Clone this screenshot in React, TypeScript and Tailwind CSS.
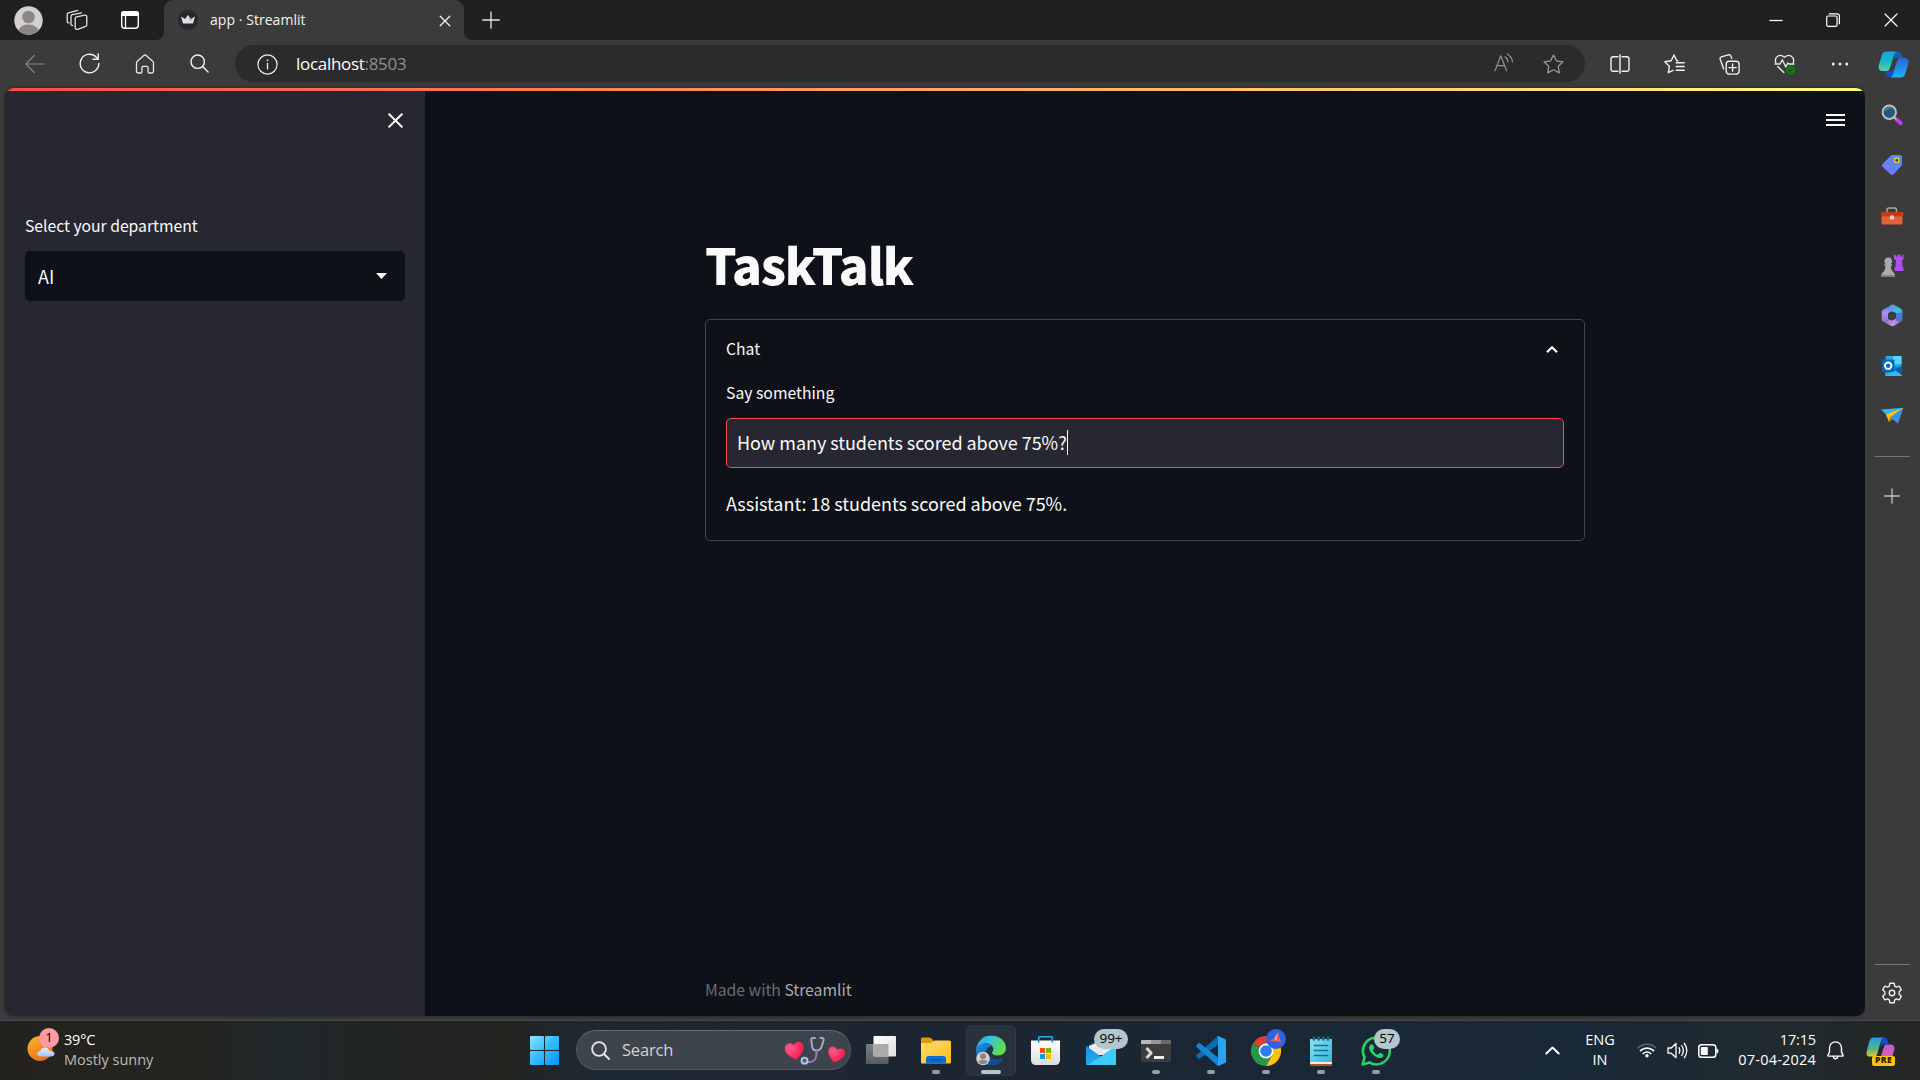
import React from "react";

const UI = "font-['Open_Sans','Noto_Sans',sans-serif]";
const SRC = "font-['Noto_Sans_CJK_SC',sans-serif]";

type IconProps = { w?: number; h?: number; box: string; children: React.ReactNode; className?: string };

function Icon({ w = 20, h = 20, box, children, className = "" }: IconProps) {
  return (
    <svg width={w} height={h} viewBox={box} fill="none" strokeLinecap="round" strokeLinejoin="round" className={"shrink-0 " + className}>
      {children}
    </svg>
  );
}

function Cell({ className = "", children }: { className?: string; children: React.ReactNode }) {
  return <div className={"flex shrink-0 items-center justify-center " + className}>{children}</div>;
}

function TabStrip() {
  return (
    <header className="flex h-10 shrink-0 bg-[#3b3b3b]">
      <div className="flex w-[164px] items-center rounded-br-[8px] bg-[#202020]">
        <Cell className="ml-[13px] w-[30px]">
          <Icon w={29} h={29} box="0 0 29 29">
            <defs>
              <clipPath id="avatar"><circle cx="14.5" cy="14.5" r="14.2" /></clipPath>
            </defs>
            <g clipPath="url(#avatar)">
              <rect width="29" height="29" fill="#d2d0ce" />
              <circle cx="14.5" cy="11" r="6.3" fill="#8a8785" />
              <ellipse cx="14.5" cy="26.5" rx="10.5" ry="8" fill="#8a8785" />
            </g>
          </Icon>
        </Cell>
        <Cell className="ml-[18px] w-8">
          <Icon w={22} h={22} box="0 0 22 22">
            <g stroke="#e2e2e2" strokeWidth="1.3">
              <path d="M9.2 9.4c0-.8.5-1.4 1.300-1.600l8.300-1.700c1.200-.2 2 .5 2 1.600v8c0 .8-.5 1.500-1.300 1.700l-7.600 2.900c-1.200.4-2.700-.2-2.700-1.500z" />
              <path d="M6.600 16.500c-1 .1-1.600-.6-1.600-1.600V7.300c0-.8.5-1.400 1.300-1.600l9.300-1.900" />
              <path d="M3 13.800c-1.200.2-1.800-.5-1.800-1.500V5.400c0-.8.5-1.400 1.300-1.600L11.700 1.300" />
            </g>
          </Icon>
        </Cell>
        <Cell className="ml-[21px] w-8">
          <Icon w={20} h={20} box="0 0 20 20">
            <rect x="1.700" y="1.700" width="16.600" height="16.600" rx="3" stroke="#fff" strokeWidth="1.400" />
            <path d="M1 6V4a3 3 0 0 1 3-3h12a3 3 0 0 1 3 3v2z" fill="#fff" />
            <path d="M5.500 6v12" stroke="#fff" strokeWidth="1.300" />
          </Icon>
        </Cell>
      </div>
      <div className="w-[300px] bg-[#202020]">
        <div className="flex h-full items-center rounded-t-[9px] bg-[#3b3b3b] pl-[14px] pr-[13px]">
          <Icon w={20} h={20} box="0 0 20 20">
            <circle cx="10" cy="10" r="10" fill="#262730" />
            <path d="M3 6.500l4 2.500 3-4 3 4 4-2.500-2 7H5z" fill="#dedede" />
            <path d="M10 5l3 4 4-2.500L12 11z" fill="#a5a5a5" />
          </Icon>
          <span className={UI + " ml-3 grow pb-px text-[14px] leading-5 tracking-[0.05px] text-[#f4f4f4]"}>app · Streamlit</span>
          <Icon w={12} h={12} box="0 0 12 12" className="mt-px">
            <path d="M1.200 1.200l9.600 9.600M10.800 1.200l-9.600 9.600" stroke="#f0f0f0" strokeWidth="1.300" />
          </Icon>
        </div>
      </div>
      <div className="flex grow items-center rounded-bl-[8px] bg-[#202020] pl-[18px]">
        <Icon w={18} h={18} box="0 0 18 18">
          <path d="M9 .8v16.400M.8 9h16.400" stroke="#e8e8e8" strokeWidth="1.300" />
        </Icon>
        <div className="ml-auto flex">
          <Cell className="w-[57px]">
            <Icon w={14} h={14} box="0 0 14 14"><path d="M.5 7.500h13" stroke="#fff" strokeWidth="1.200" strokeLinecap="butt" /></Icon>
          </Cell>
          <Cell className="w-[58px]">
            <Icon w={14} h={14} box="0 0 14 14">
              <rect x=".7" y="3" width="10.400" height="10.400" rx="1.500" stroke="#fff" strokeWidth="1.200" />
              <path d="M3.300.8h7.700a2.400 2.400 0 0 1 2.400 2.400v7.500" stroke="#fff" strokeWidth="1.200" />
            </Icon>
          </Cell>
          <Cell className="w-[58px]">
            <Icon w={14} h={14} box="0 0 14 14"><path d="M1 1l12 12M13 1L1 13" stroke="#fff" strokeWidth="1.200" /></Icon>
          </Cell>
        </div>
      </div>
    </header>
  );
}

function Toolbar() {
  return (
    <div className="flex h-12 shrink-0 bg-[#3b3b3b]">
      <div className="flex w-[235px] items-center pb-[1px] pl-[7px]">
        <Cell className="w-[55px]">
          <Icon w={20} h={20} box="0 0 20 20"><path d="M19.300 10H1M9.300 1.500L.9 10l8.400 8.500" stroke="#858585" strokeWidth="1.200" /></Icon>
        </Cell>
        <Cell className="w-[55px]">
          <Icon w={21} h={21} box="0 0 21 21">
            <path d="M19.800 10.500A9.300 9.300 0 1 1 16.500 3.400L19 6" stroke="#f2f2f2" strokeWidth="1.400" />
            <path d="M19.200 1v5.200H14" stroke="#f2f2f2" strokeWidth="1.400" />
          </Icon>
        </Cell>
        <Cell className="w-[55px]">
          <Icon w={20} h={20} box="0 0 20 20">
            <path d="M1.500 9c0-.7.300-1.300.8-1.700L8.800 1.500a1.800 1.800 0 0 1 2.400 0l6.500 5.800c.5.400.8 1 .8 1.700v8.200c0 1-.8 1.800-1.800 1.800h-2.400a1.200 1.200 0 0 1-1.200-1.200V13.500c0-.7-.5-1.200-1.200-1.200H8.100c-.7 0-1.200.5-1.200 1.200v4.300c0 .7-.5 1.200-1.200 1.200H3.300c-1 0-1.800-.8-1.800-1.800z" stroke="#e6e6e6" strokeWidth="1.300" />
          </Icon>
        </Cell>
        <Cell className="w-[55px]">
          <Icon w={19} h={19} box="0 0 19 19"><circle cx="7.700" cy="7.700" r="6.700" stroke="#f0f0f0" strokeWidth="1.400" /><path d="M12.600 12.600l5.500 5.500" stroke="#f0f0f0" strokeWidth="1.400" /></Icon>
        </Cell>
      </div>
      <div className="mt-[5px] flex h-[37px] w-[1350px] items-center rounded-full bg-[#2b2b2b] pl-[22px] pr-[21px]">
        <Icon w={21} h={21} box="0 0 21 21" className="mt-px">
          <circle cx="10.500" cy="10.500" r="9.600" stroke="#f0f0f0" strokeWidth="1.200" />
          <path d="M10.500 9.500v5.500" stroke="#f0f0f0" strokeWidth="1.300" /><circle cx="10.500" cy="6.300" r=".9" fill="#f0f0f0" />
        </Icon>
        <span className={UI + " ml-[18px] grow text-[17px] leading-6 tracking-[-0.3px] text-white"}>localhost<span className="text-[#8f8f8f]">:8503</span></span>
        <Icon w={20} h={19} box="0 0 20 19" className="mr-[29px] -mt-[2px]">
          <g stroke="#929292" strokeWidth="1.200">
            <path d="M1 17.800L6.800 2.800l5.800 15M3.200 12.600h7.300" />
            <path d="M11 3.800c1.700 1.200 2.700 3 2.900 5M13.300.9c2.900 1.700 4.900 4.700 5.200 8" />
          </g>
        </Icon>
        <Icon w={21} h={20} box="0 0 21 20">
          <path d="M10.500 1l2.900 5.800 6.500 1-4.700 4.600 1.100 6.500-5.800-3.100-5.800 3.100 1.100-6.500L1.100 7.800l6.500-1z" stroke="#9a9a9a" strokeWidth="1.300" />
        </Icon>
      </div>
      <div className="flex w-[335px] items-center pl-[7px]">
        <Cell className="w-[55px]">
          <Icon w={20} h={20} box="0 0 20 20">
            <path d="M8 2.800H3.200C1.900 2.800 1 3.700 1 5v10c0 1.300.9 2.200 2.200 2.200H8M12 2.800h4.800c1.300 0 2.200.9 2.200 2.200v10c0 1.300-.9 2.200-2.200 2.200H12M10 .7v18.600" stroke="#f0f0f0" strokeWidth="1.400" />
          </Icon>
        </Cell>
        <Cell className="w-[55px]">
          <Icon w={21} h={20} box="0 0 21 20">
            <path d="M13.800 6.800l-1.100-.2L10 1 7.100 6.800l-6.200 1 4.500 4.600-1.100 6.300L9 16.400M12.200 8.800h8M12.200 12.500h8M12.200 16.200h8" stroke="#f0f0f0" strokeWidth="1.400" />
          </Icon>
        </Cell>
        <Cell className="w-[55px]">
          <Icon w={21} h={21} box="0 0 21 21">
            <rect x="7.200" y="7.200" width="12.900" height="12.900" rx="3" stroke="#f0f0f0" strokeWidth="1.400" />
            <path d="M13.600 10v7.300M10 13.600h7.300M4.600 14.800L1.200 5.300c-.3-1 .1-2 1.100-2.400L9.400.9c1-.3 2 .1 2.400 1.100l.9 2.300" stroke="#f0f0f0" strokeWidth="1.400" />
          </Icon>
        </Cell>
        <Cell className="w-[55px]">
          <Icon w={22} h={21} box="0 0 22 21">
            <path d="M1.800 8.500C-.2 3 5.800-1 10.500 3.300 15.200-1 21 3 19.300 8.500M1 10h5l2.300-4.200 3.400 7 2.100-3.800 1 1H20M3.800 12.600l6 5.800" stroke="#e8e8e8" strokeWidth="1.400" />
            <circle cx="16.500" cy="16" r="4.600" fill="#117a12" />
            <path d="M14.500 16.100l1.400 1.400 2.700-2.900" stroke="#0a3f0b" strokeWidth="1" />
          </Icon>
        </Cell>
        <Cell className="w-[55px]">
          <Icon w={18} h={6} box="0 0 18 6"><g fill="#f0f0f0"><circle cx="2.200" cy="3" r="1.500" /><circle cx="9" cy="3" r="1.500" /><circle cx="15.800" cy="3" r="1.500" /></g></Icon>
        </Cell>
        <Cell className="w-[52px]">
          <Icon w={31} h={27} box="0 0 31 27">
            <defs>
              <linearGradient id="cpA" x1="0" y1="0" x2="0" y2="1"><stop stopColor="#16a5dd" /><stop offset=".5" stopColor="#15b7c4" /><stop offset="1" stopColor="#5bd59b" /></linearGradient>
              <linearGradient id="cpB" x1="0" y1="0" x2="0" y2="1"><stop stopColor="#2a63d8" /><stop offset="1" stopColor="#1fb4f2" /></linearGradient>
            </defs>
            <path d="M17 .6h3.200c1.500 0 2.300 1 2.900 2.500l1.400 4H19c-2.500 0-3.300 1.500-3.900 3.600z" fill="#0f62ae" />
            <path d="M14.500 26.400h-3c-1.700 0-2.700-1.100-3.200-2.800L7.500 20h4.700c2 0 3-1.200 3.600-3.200z" fill="#1c4bd2" />
            <path d="M8.500.6h10.200c-1.500.3-2.200 1.700-2.700 3.300l-4 13.200c-.6 1.900-1.600 2.900-3.600 2.900H4.200C1.500 20-.1 17.700.7 14.500L3.700 4.400C4.500 1.800 6 .6 8.500.6z" fill="url(#cpA)" />
            <path d="M22.500 26.400H12.300c1.500-.3 2.200-1.700 2.700-3.300l4-13.200C19.600 8 20.600 7 22.600 7h4.200c2.700 0 4.300 2.300 3.500 5.500l-3 10.100c-.8 2.600-2.300 3.800-4.800 3.800z" fill="url(#cpB)" />
          </Icon>
        </Cell>
      </div>
    </div>
  );
}

function StreamlitSidebar() {
  return (
    <aside className={SRC + " flex w-[420px] shrink-0 flex-col bg-[#262730] px-5 text-[#fafafa]"}>
      <div className="mt-[22px] flex h-[15px] justify-end">
        <Icon w={15} h={15} box="0 0 15 15" className="mr-[2px]"><path d="M1.200 1.200l12.600 12.600M13.800 1.200L1.200 13.800" stroke="#fafafa" strokeWidth="2" /></Icon>
      </div>
      <div className="mt-[86px] h-6 text-[15.750px] leading-6 tracking-[-0.030px]">Select your department</div>
      <div className="mt-[13px] flex h-[50px] items-center justify-between rounded-[5px] bg-[#0e1117] pl-[13px] pr-[18px] text-[18px] leading-6">
        <span>AI</span>
        <Icon w={11} h={6} box="0 0 11 6"><path d="M0 0h11L5.500 6z" fill="#fafafa" /></Icon>
      </div>
    </aside>
  );
}

function StreamlitMain() {
  return (
    <main className={SRC + " relative flex grow flex-col bg-[#0e1117] text-[#fafafa]"}>
      <div className="flex h-[56px] items-center justify-end pr-5 pt-px">
        <div className="flex w-[19px] flex-col gap-[3px]">
          <div className="h-[2px] bg-[#fafafa]" />
          <div className="h-[2px] bg-[#fafafa]" />
          <div className="h-[2px] bg-[#fafafa]" />
        </div>
      </div>
      <div className="mx-auto flex w-[880px] grow flex-col">
        <h1 className="mt-[84px] h-[66px] text-[49.500px] font-black leading-[66px] tracking-[-1.200px]">TaskTalk</h1>
        <section className="mt-[22px] flex h-[222px] flex-col rounded-[5px] border border-[#41444c] px-5">
          <div className="mt-[17px] flex h-6 items-center justify-between text-[15.750px] leading-6">
            <span>Chat</span>
            <Icon w={14} h={9} box="0 0 14 9" className="mr-[5px]"><path d="M2 7.200l5-5 5 5" stroke="#fafafa" strokeWidth="2.200" strokeLinecap="butt" strokeLinejoin="miter" /></Icon>
          </div>
          <div className="mt-5 h-6 text-[15.750px] leading-6">Say something</div>
          <div className="mt-[13px] flex h-[50px] shrink-0 items-center rounded-[5px] border border-[#ff4b4b] bg-[#262730] pb-[2px] pl-[10px] text-[18px]">
            <span className="leading-6 tracking-[-0.040px]">How many students scored above 75%?</span>
            <span className="h-[25px] w-px bg-white" />
          </div>
          <p className="mt-[23px] h-6 text-[18px] leading-6 tracking-[-0.040px]">Assistant: 18 students scored above 75%.</p>
        </section>
        <footer className="mb-[14px] mt-auto h-6 text-[15.750px] leading-6 tracking-[-0.030px] text-[#6a6c72]">
          Made with <span className="text-[#a9abb0]">Streamlit</span>
        </footer>
      </div>
    </main>
  );
}

function EdgeRail() {
  return (
    <aside className="flex w-[55px] shrink-0 flex-col items-center bg-[#3b3b3b] pr-[1px]">
      <Cell className="mt-[2px] h-[50px]">
        <Icon w={22} h={22} box="0 0 22 22">
          <path d="M15.500 15.500l4 3.600" stroke="#c03cf5" strokeWidth="4" /><path d="M12.500 12.500l2 2" stroke="#bbb" strokeWidth="2" />
          <circle cx="8.300" cy="8.300" r="6.700" fill="#22597a" stroke="#bdbdbd" strokeWidth="2" /><path d="M4.500 7a4.500 4.500 0 0 1 5-3" stroke="#5289a8" strokeWidth="1.200" />
        </Icon>
      </Cell>
      <Cell className="h-[50px]">
        <Icon w={22} h={22} box="0 0 22 22">
          <defs><linearGradient id="tag" x1="1" y1="0" x2="0" y2="1"><stop stopColor="#4b8cf2" /><stop offset="1" stopColor="#7b78ff" /></linearGradient></defs>
          <path d="M12 1h7c1.200 0 2 .8 2 2v7c0 1-.3 1.600-1 2.300l-7.500 8c-1 1-2 1-3 0L1.700 13c-1-1-1-2 0-3L9.500 2C10.300 1.200 11 1 12 1z" fill="url(#tag)" />
          <circle cx="15.700" cy="6.200" r="2.200" fill="#27417b" stroke="#f4d21f" strokeWidth="1.400" />
        </Icon>
      </Cell>
      <Cell className="h-[52px]">
        <Icon w={24} h={18} box="0 0 24 18">
          <path d="M7 6V3c0-1.200.8-1.900 2-1.900h5.500c1.200 0 2 .7 2 1.900v3" stroke="#a6a6a6" strokeWidth="1.500" />
          <rect x="1.500" y="8" width="21" height="9.500" rx="1.500" fill="#e2603a" />
          <rect x="1" y="5" width="22.500" height="4.500" rx="1" fill="#c23c12" />
          <circle cx="12" cy="10.500" r="2.200" fill="#d0cfcd" />
        </Icon>
      </Cell>
      <Cell className="h-[48px]">
        <Icon w={24} h={24} box="0 0 24 24">
          <path d="M14 1h2v1.500h1.500V.5h3v2H22V1h1.500v4L22 6.500l.7 7h.8v3.500h-9v-3.500h.8l.7-7L14 5z" fill="#b14df0" />
          <path d="M8.200 3.500a3.800 3.800 0 0 1 2.600 6.700h1.300v1.600h-1.300c.1 3 .7 5 3.200 7.200.9.800 1 1.800 1 3.500H1.200c0-1.700.2-2.700 1.100-3.500C4.700 16.800 5.400 14.800 5.500 11.800H4.300v-1.600h1.300A3.800 3.800 0 0 1 8.200 3.500z" fill="#ababab" />
          <path d="M1.200 20.800H15v1.700H1.200z" fill="#8a8a8a" />
        </Icon>
      </Cell>
      <Cell className="h-[52px]">
        <Icon w={22} h={23} box="0 0 22 23" className="-mt-px">
          <defs>
            <linearGradient id="m3a" x1="0" y1="0" x2="0" y2="1"><stop stopColor="#3b86de" /><stop offset=".5" stopColor="#b48be6" /><stop offset="1" stopColor="#8a6fd2" /></linearGradient>
            <linearGradient id="m3b" x1="0" y1="0" x2="1" y2="1"><stop stopColor="#6a8fe0" /><stop offset=".6" stopColor="#38bdea" /><stop offset="1" stopColor="#2f9fdc" /></linearGradient>
            <linearGradient id="m3c" x1="0" y1="0" x2="1" y2="0"><stop stopColor="#8466bd" /><stop offset=".5" stopColor="#c795dc" /><stop offset="1" stopColor="#5f6fcf" /></linearGradient>
          </defs>
          <path d="M11 .7L2.500 5.500C1.200 6.300.7 7 .7 8.500v7c0 1 .5 1.800 1.500 2.300 2 1 5-.2 5-2.700V9.700c1-1.500 2-2 3.300-4z" fill="url(#m3a)" />
          <path d="M8 2.300l2.500-1.400c1-.5 1.800-.5 2.800 0l6.500 3.800c1 .6 1.500 1.500 1.500 2.700v5.400L14.500 8.800 10 7.500 8.500 8.300z" fill="url(#m3b)" />
          <path d="M19.800 17.700l-7 4.200c-1 .6-2 .6-3 0l-7-4.200c2.500.4 4.400-.7 4.500-2.700l3.700 1.200 4-2.700 6.300-.8c.1 1.900-.3 4.100-1.500 5z" fill="url(#m3c)" />
          <path d="M21.300 9v5.500c0 1.500-.5 2.500-1.600 3.200-2 .8-4.500-.2-4.700-2.600V9z" fill="#4f74d4" />
          <path d="M11 7.500l4 2.200v4.800l-4 2.200-4-2.200V9.700z" fill="#3b3b3b" />
        </Icon>
      </Cell>
      <Cell className="h-[48px]">
        <Icon w={22} h={22} box="0 0 22 22">
          <rect x="4.500" y="1" width="16" height="16" rx="1" fill="#28a8ea" />
          <path d="M12 1h7.500a1 1 0 0 1 1 1v7H12z" fill="#50d9ff" />
          <path d="M4 11l17 0v9a1 1 0 0 1-1 1H5a1 1 0 0 1-1-1z" fill="#1490df" />
          <path d="M21 11v9.500L12 15z" fill="#0a5ea8" /><path d="M4 20l10-5 7 5.500c-.3.300-.6.500-1 .5H5z" fill="#35b8f1" />
          <rect x="1" y="4.500" width="12.500" height="12.500" rx="1.200" fill="#0a64b8" />
          <circle cx="7.200" cy="10.700" r="3.200" stroke="#fff" strokeWidth="1.900" />
        </Icon>
      </Cell>
      <Cell className="h-[50px]">
        <Icon w={23} h={17} box="0 0 23 17">
          <path d="M0 2.500L22.500.8 7 9.500z" fill="#35b6f2" /><path d="M22.500.8L17 16.500 8.500 10z" fill="#3993e8" />
          <path d="M5 7.500L22.500.8 9 10.200l-1 5z" fill="#ffc21c" /><path d="M9 10.200l2.500 1.800L8 15z" fill="#d98305" />
        </Icon>
      </Cell>
      <div className="mt-[16px] h-px w-[35px] bg-[#757575]" />
      <Cell className="mt-[30px] h-[18px]">
        <Icon w={16} h={16} box="0 0 16 16"><path d="M8 .8v14.400M.8 8h14.400" stroke="#c4c4c4" strokeWidth="1.300" /></Icon>
      </Cell>
      <div className="mb-[17px] mt-auto h-px w-[35px] bg-[#757575]" />
      <Icon w={22} h={22} box="0 0 24 24" className="mb-[16px]">
        <path d="M9.700 1.300h4.600l.7 3.200 1.800 1 3.100-1 2.300 4-2.400 2.200v2.600l2.400 2.200-2.300 4-3.100-1-1.800 1-.7 3.200H9.700L9 19.500l-1.800-1-3.100 1-2.300-4 2.400-2.200v-2.600L1.800 8.500l2.300-4 3.100 1 1.800-1z" stroke="#efefef" strokeWidth="1.500" />
        <circle cx="12" cy="12" r="3" stroke="#efefef" strokeWidth="1.500" />
      </Icon>
    </aside>
  );
}

function TaskbarApp({ children, dot }: { children: React.ReactNode; dot?: boolean }) {
  return (
    <div className="relative flex h-full w-[55px] shrink-0 items-center justify-center">
      {children}
      {dot && <div className="absolute bottom-[6px] h-1 w-2 rounded-full bg-[#989da3]" />}
    </div>
  );
}

function Badge({ className, children }: { className: string; children: React.ReactNode }) {
  return (
    <div className={UI + " absolute top-[8px] flex h-5 items-center justify-center rounded-full bg-[#b2c6cd] text-[13.500px] leading-none text-black " + className}>
      {children}
    </div>
  );
}

function Heart({ id }: { id: string }) {
  return (
    <>
      <defs><radialGradient id={id} cx=".3" cy=".3" r=".8"><stop stopColor="#ff5a8c" /><stop offset=".6" stopColor="#fb2e62" /><stop offset="1" stopColor="#e81a45" /></radialGradient></defs>
      <path d="M9 17C3 12.500 0 9.500 0 5.500 0 .5 6-1.500 9 3c3-4.500 9-2.500 9 2.500 0 4-3 7-9 11.500z" fill={"url(#" + id + ")"} />
    </>
  );
}

function Taskbar() {
  return (
    <div className={UI + " flex h-[60px] shrink-0 border-t border-[#454a4e] bg-[linear-gradient(90deg,#24221f_0px,#242420_190px,#20282a_280px,#222424_400px,#242421_500px,#1c2932_600px,#1e2733_750px,#1c2631_900px,#1b2735_1250px,#192838_1560px,#1f2b30_1760px,#242624_1920px)]"}>
      <div className="flex w-[517px] pl-[27px]">
        <div className="relative w-[37px]">
          <Icon w={28} h={26} box="0 0 28 26" className="mt-[14px]">
            <defs>
              <linearGradient id="sun" x1="0" y1="0" x2=".6" y2="1"><stop stopColor="#f7bd2e" /><stop offset="1" stopColor="#f06a12" /></linearGradient>
              <linearGradient id="cloud" x1="0" y1="0" x2="0" y2="1"><stop stopColor="#e7f0ff" /><stop offset="1" stopColor="#a5c2f4" /></linearGradient>
            </defs>
            <circle cx="13" cy="13.500" r="12.500" fill="url(#sun)" />
            <path d="M13.500 21.500c-2 0-3.200-1-3.200-2.800 0-1.600 1.200-2.700 3-2.700.5-2.200 2.200-3.500 4.500-3.500s4 1.200 4.500 3.200c3 0 5.200.8 5.200 3.100 0 2-1.600 2.700-3.500 2.700z" fill="url(#cloud)" />
          </Icon>
          <div className="absolute left-[12px] top-[7px] flex h-5 w-5 items-center justify-center rounded-full bg-[#ff99a4] text-[13px] text-black">1</div>
        </div>
        <div className="flex flex-col pt-[9px] text-[14.500px] leading-5">
          <span className="tracking-[-0.200px] text-white">39°C</span>
          <span className="text-[#bcbcb9]">Mostly sunny</span>
        </div>
      </div>

      <TaskbarApp>
        <Icon w={29} h={29} box="0 0 29 29">
          <defs><linearGradient id="win" x1="0" y1="0" x2="29" y2="29" gradientUnits="userSpaceOnUse"><stop stopColor="#8fe2ff" /><stop offset=".45" stopColor="#38bfff" /><stop offset="1" stopColor="#0894f6" /></linearGradient></defs>
          <g fill="url(#win)"><rect width="14" height="14" rx="1" /><rect x="15" width="14" height="14" rx="1" /><rect y="15" width="14" height="14" rx="1" /><rect x="15" y="15" width="14" height="14" rx="1" /></g>
        </Icon>
      </TaskbarApp>
      <div className="ml-[4px] mt-[9px] flex h-10 w-[275px] shrink-0 items-center rounded-full border border-[#50575d] border-t-[#646a6f] bg-[#3d444b] pl-[14px] pr-[5px]">
        <Icon w={19} h={19} box="0 0 19 19"><circle cx="8" cy="8" r="6.900" stroke="#e6e8ea" strokeWidth="1.800" /><path d="M13 13l5 5" stroke="#e6e8ea" strokeWidth="2" /></Icon>
        <span className="ml-[12px] grow text-[16.500px] leading-6 tracking-[-0.200px] text-[#d2d4d6]">Search</span>
        <Icon w={60} h={30} box="0 0 60 30">
          <g transform="translate(0 7) rotate(-10 9 8) scale(1.060)"><Heart id="h1" /></g>
          <g transform="translate(42.500 12) rotate(14 9 8) scale(.94)"><Heart id="h2" /></g>
          <path d="M30 3h-2c-1.500 0-2 .8-1.700 2.500l.8 6c.4 2.600 2 4 4.400 4s4.400-1.500 5.200-4l1.800-6c.5-1.600 0-2.500-1.500-2.500h-1.500" stroke="#a6a4cc" strokeWidth="2" />
          <path d="M31.500 15.500v3c0 5-2.500 8.500-6.500 8.500h-4" stroke="#9a7fb0" strokeWidth="2" />
          <circle cx="19.500" cy="25.700" r="3" fill="#49627f" stroke="#a9cdf0" strokeWidth="1.800" />
        </Icon>
      </div>
      <div className="flex pl-[2px]">
        <TaskbarApp>
          <Icon w={30} h={28} box="0 0 30 28" className="-mt-[1px]">
            <defs>
              <linearGradient id="tv1" x1="0" y1="0" x2="1" y2="1"><stop stopColor="#fff" /><stop offset="1" stopColor="#dedede" /></linearGradient>
              <linearGradient id="tv2" x1="0" y1="0" x2="0" y2="1"><stop stopColor="#7d7d7d" /><stop offset="1" stopColor="#5b5c5e" /></linearGradient>
            </defs>
            <rect y="8" width="22.500" height="20" rx="1" fill="url(#tv2)" />
            <rect x="7.500" width="22.500" height="20.500" rx="1" fill="url(#tv1)" />
            <path d="M7.500 8h15v12.500h-15z" fill="#ababab" />
          </Icon>
        </TaskbarApp>
        <TaskbarApp dot>
          <Icon w={30} h={27} box="0 0 30 27">
            <defs><linearGradient id="fe" x1="0" y1="0" x2="1" y2="1"><stop stopColor="#ffdc6a" /><stop offset="1" stopColor="#fcbc20" /></linearGradient></defs>
            <path d="M0 2c0-1 .7-1.500 1.500-1.500h6.800c.8 0 1.300.2 1.800.7l2.400 2.300V8H0z" fill="#dd9a0a" />
            <path d="M0 6h9.500c.8 0 1.400-.3 2-.8l1.200-1.200c.4-.3.800-.5 1.300-.5h14.500c.9 0 1.500.6 1.500 1.500v20c0 1-.6 1.500-1.500 1.500h-27C.6 26.500 0 26 0 25z" fill="url(#fe)" />
            <path d="M5 26.500v-5c0-1.500 1-2.500 2.500-2.500h15c1.500 0 2.500 1 2.500 2.500v5z" fill="#0b6fcd" />
            <path d="M9 22.800h12" stroke="#0a4e98" strokeWidth="1.300" />
          </Icon>
        </TaskbarApp>
        <div className="relative flex h-full w-[55px] items-center justify-center">
          <div className="flex h-[50px] w-[50px] -translate-y-[0.500px] items-center justify-center rounded-[5px] border border-[#333d46] bg-[#29323b]">
            <Icon w={30} h={30} box="0 0 30 30">
              <defs>
                <linearGradient id="ed1" x1="0" y1="0" x2="1" y2=".4"><stop stopColor="#2a9ff0" /><stop offset=".45" stopColor="#35c1e6" /><stop offset="1" stopColor="#62dc4e" /></linearGradient>
                <linearGradient id="ed2" x1="0" y1="0" x2=".8" y2="1"><stop stopColor="#1c93e6" /><stop offset="1" stopColor="#0b4fa0" /></linearGradient>
              </defs>
              <path d="M0 15C1 6 7 0 15 0c9 0 15 6 15 12.500 0 4.500-3.500 7.500-8 7.500-4 0-6.500-1.500-6-3 .3-1 1.500-1.500 1.300-4C17 10 13 7.500 9.500 7.800 5 8 1.500 11 0 15z" fill="url(#ed1)" />
              <path d="M0 15c1.500-4.500 5-7 9.500-7.200 2.500-.1 5 1 6.500 2.600-4 .6-6.500 4-6.500 7.600 0 5.500 4 10 9 10.500C16 30 13 30 11.500 29.600 4.500 28.500 0 22 0 15z" fill="url(#ed2)" />
              <path d="M11 13.500c-1 4.500 3 10 9.500 10.200 3 .1 5-.8 6.700-1.700.8-.3 1 .2.600.8C25.500 26.500 22 29.500 17 30c-5-2-7.500-6-7.500-11 0-2.500.5-4.500 1.500-5.500z" fill="#114f93" />
              <circle cx="7" cy="23" r="6.800" fill="#d3d2d0" /><circle cx="7" cy="20.800" r="3" fill="#8a8785" /><path d="M2.500 26.500c1-3 8-3 9 0-2 3-7 3-9 0z" fill="#8a8785" />
            </Icon>
          </div>
          <div className="absolute bottom-[6px] h-1 w-5 rounded-full bg-[#b2c6cd]" />
        </div>
        <TaskbarApp>
          <Icon w={29} h={29} box="0 0 29 29">
            <defs><linearGradient id="st" x1="0" y1="0" x2="0" y2="1"><stop stopColor="#fff" /><stop offset="1" stopColor="#dcdcdc" /></linearGradient></defs>
            <path d="M7.700 6V1.800c0-.7.400-1 1-1h11.600c.6 0 1 .3 1 1V6" stroke="#27aef0" strokeWidth="1.600" />
            <path d="M0 4.500h29V24c0 3-2 5-5 5H5c-3 0-5-2-5-5z" fill="url(#st)" />
            <path d="M7.700 4v2M21.300 4v2" stroke="#1386c8" strokeWidth="1.600" />
            <path d="M9 12h5v5H9z" fill="#f25022" /><path d="M15 12h5v5h-5z" fill="#7fba00" /><path d="M9 18h5v5H9z" fill="#00a4ef" /><path d="M15 18h5v5h-5z" fill="#ffb900" />
          </Icon>
        </TaskbarApp>
        <TaskbarApp>
          <Icon w={30} h={24} box="0 0 30 24" className="mt-[4px]">
            <defs><linearGradient id="ml" x1="0" y1="0" x2="1" y2="1"><stop stopColor="#1a8fe0" /><stop offset="1" stopColor="#2cc0f5" /></linearGradient></defs>
            <path d="M0 6L15-3 30 6v4H0z" fill="#0a5aa8" />
            <path d="M3 5l9-4h15v13H3z" fill="#e9eaeb" />
            <path d="M0 5l15 10.500L30 5v18c0 .6-.4 1-1 1H1c-.6 0-1-.4-1-1z" fill="url(#ml)" />
            <path d="M30 5v18c0 .6-.4 1-1 1H2l13-8.500z" fill="#3ccbf6" />
          </Icon>
          <Badge className="left-[21px] w-[34px]">99+</Badge>
        </TaskbarApp>
        <TaskbarApp dot>
          <Icon w={30} h={22} box="0 0 30 22">
            <rect width="30" height="22" rx="1.500" fill="#3d3d3d" />
            <path d="M0 1.500C0 .5.500 0 1.500 0H10v4H0z" fill="#b8b8b8" /><path d="M10 0h10v4H10z" fill="#969696" /><path d="M20 0h8.500c1 0 1.500.5 1.500 1.500V4H20z" fill="#6a6a6a" />
            <path d="M5.500 8l4.700 5-4.700 5" stroke="#d5d5d5" strokeWidth="3" strokeLinecap="butt" /><path d="M13 17.500h10" stroke="#fff" strokeWidth="2.800" strokeLinecap="butt" />
          </Icon>
        </TaskbarApp>
        <TaskbarApp dot>
          <Icon w={30} h={30} box="0 0 30 30">
            <path d="M22 0v8.500L4 22.700c-.6.400-1.200.4-1.700-.1L.5 20.800c-.6-.6-.6-1.300 0-1.900z" fill="#0b6cb4" />
            <path d="M22 30v-8.500L4 7.300c-.6-.4-1.200-.4-1.700.1L.5 9.200c-.6.600-.6 1.300 0 1.900z" fill="#1585cf" />
            <path d="M22 0l7 3c.6.300 1 .8 1 1.500v21c0 .7-.4 1.200-1 1.500l-7 3c-.7.200-1 0-1.500-.5.900.6 1.500.2 1.500-.8V1.300c0-1-.6-1.400-1.500-.8.500-.5.800-.7 1.500-.5z" fill="#2aa3f0" />
          </Icon>
        </TaskbarApp>
        <TaskbarApp dot>
          <Icon w={30} h={30} box="0 0 30 30">
            <path d="M15 15L2 7.500A15 15 0 0 1 28 7.500z" fill="#e33b2e" />
            <path d="M15 15L2 7.500A15 15 0 0 0 15 30l6.500-11.300z" fill="#249a48" />
            <path d="M28 7.500A15 15 0 0 1 15 30l6.500-11.300L15 7.500z" fill="#fcc20c" />
            <circle cx="15" cy="15" r="7.400" fill="#fff" /><circle cx="15" cy="15" r="5.800" fill="#2f7cf0" />
          </Icon>
          <div className="absolute left-[28px] top-[8px]">
            <Icon w={20} h={20} box="0 0 20 20"><circle cx="10" cy="10" r="10" fill="#2d63e2" /><path d="M12 3.200l3.200 10.600-5-1.600-6.700 0 4.800-2.600z" fill="#ef5a5e" /><path d="M12 3.200l-1.800 9-1.900-2.600z" fill="#ff9f94" /></Icon>
          </div>
        </TaskbarApp>
        <TaskbarApp dot>
          <Icon w={22} h={30} box="0 0 22 30">
            <defs><linearGradient id="np" x1="0" y1="0" x2="1" y2="1"><stop stopColor="#8be2f5" /><stop offset="1" stopColor="#37b5d6" /></linearGradient></defs>
            <rect y="25" width="22" height="5" rx="1" fill="#b9540f" /><rect y="22" width="22" height="6" rx="1" fill="#f1f1f1" />
            <path d="M0 3h22v23H0z" fill="url(#np)" />
            <path d="M4 1.500v2M8.700 1.500v2M13.300 1.500v2M18 1.500v2" stroke="#0b6e8c" strokeWidth="2.600" />
            <path d="M4.500 9.500h13M4.500 14.500h13M4.500 19.500h13" stroke="#0b7396" strokeWidth="1.700" />
          </Icon>
        </TaskbarApp>
        <TaskbarApp dot>
          <Icon w={30} h={30} box="0 0 30 30">
            <path d="M1.600 28.400l2-7A13.400 13.400 0 1 1 8.700 26.600z" stroke="#25d366" strokeWidth="2.600" />
            <path d="M10.500 8.300c-.7 0-2.500 1.200-2.500 3.500 0 4.700 6.500 10.200 11 10.200 2 0 3.500-1.300 3.500-3 0-.7-3-2.200-3.500-2.200-.8 0-1.300 1.800-2.200 1.800-1.300 0-4.800-3-4.800-4.400 0-.7 1.400-1.300 1.400-2.100 0-.7-1.400-3.800-2.200-3.800z" fill="#25d366" />
          </Icon>
          <Badge className="left-[26px] w-[26px]">57</Badge>
        </TaskbarApp>
      </div>

      <div className="ml-auto flex h-full items-center">
        <Icon w={15} h={9} box="0 0 15 9" className="mr-[17px]"><path d="M1.300 7.500l6.200-6 6.200 6" stroke="#fff" strokeWidth="1.900" /></Icon>
        <div className="mr-[10px] flex w-[46px] -translate-y-px flex-col items-center text-[14.500px] leading-5 text-white"><span>ENG</span><span>IN</span></div>
        <div className="mr-[12px] flex items-center gap-[10px] pl-[4px]">
          <Icon w={20} h={15} box="0 0 20 15">
            <path d="M1 5a12.500 12.500 0 0 1 18 0" stroke="#5d676d" strokeWidth="1.500" />
            <path d="M3.500 7.700a9.300 9.300 0 0 1 13 0M6.300 10.500a5.300 5.300 0 0 1 7.400 0" stroke="#fff" strokeWidth="1.700" /><circle cx="10" cy="12.800" r="1.700" fill="#fff" />
          </Icon>
          <Icon w={21} h={17} box="0 0 21 17">
            <path d="M1 6v5.200h3.200L9 15.500V1.500L4.200 6z" stroke="#fff" strokeWidth="1.300" />
            <path d="M12 5.700c1 1.700 1 3.900 0 5.600M14.700 3.500c2 3 2 7 0 10M17.400 1.300c3 4.500 3 9.900 0 14.400" stroke="#fff" strokeWidth="1.300" />
          </Icon>
          <Icon w={21} h={14} box="0 0 21 14">
            <rect x=".8" y=".8" width="17" height="12.400" rx="2.800" stroke="#fff" strokeWidth="1.500" /><rect x="2.800" y="3" width="7" height="8" rx="1" fill="#fff" /><path d="M18.300 4.700c1.300 0 2 .6 2 1.600v1.400c0 1-.7 1.600-2 1.600z" fill="#fff" />
          </Icon>
        </div>
        <div className="flex w-[85px] -translate-y-px flex-col items-end text-[14.500px] leading-5 text-white"><span className="tracking-[-0.150px]">17:15</span><span className="whitespace-nowrap tracking-[0.200px]">07-04-2024</span></div>
        <Icon w={17} h={19} box="0 0 17 19" className="ml-[11px] mr-[22px]">
          <path d="M8.500.9c3.500 0 6 2.600 6 6v4l1.500 3.300c.2.500-.1.900-.6.900H1.600c-.5 0-.8-.4-.6-.9l1.500-3.300v-4c0-3.400 2.500-6 6-6zM6.300 15.500c.2 1.500 1 2.300 2.200 2.300s2-.8 2.200-2.300" stroke="#fff" strokeWidth="1.400" />
        </Icon>
        <div className="relative mr-[25px] w-[29px]">
          <Icon w={29} h={28} box="0 0 31 30">
            <defs>
              <linearGradient id="cq1" x1="0" y1="0" x2="0" y2="1"><stop stopColor="#1e9ee8" /><stop offset=".6" stopColor="#54b583" /><stop offset="1" stopColor="#efc22a" /></linearGradient>
              <linearGradient id="cq2" x1="0" y1="0" x2="0" y2="1"><stop stopColor="#b45ee4" /><stop offset="1" stopColor="#f0648c" /></linearGradient>
            </defs>
            <path d="M17 .6h3.200c1.500 0 2.300 1 2.900 2.500l1.400 5H19c-2.500 0-3.300 1.500-3.900 3.600z" fill="#1b49cc" />
            <path d="M8.500.6h10.200c-1.500.3-2.200 1.700-2.700 3.300l-4 14.200c-.6 1.900-1.600 2.900-3.600 2.900H4.200C1.500 21-.1 18.700.7 15.500L3.700 4.400C4.500 1.800 6 .6 8.500.6z" fill="url(#cq1)" />
            <path d="M22.500 27H12.300c1.500-.3 2.200-1.700 2.700-3.300l4-12.800C19.600 9 20.600 8 22.600 8h4.200c2.700 0 4.300 2.300 3.500 5.500l-3 10.100c-.8 2.600-2.300 3.400-4.800 3.400z" fill="url(#cq2)" />
          </Icon>
          <div className="absolute -bottom-[1px] left-[6px] flex h-[10px] w-[23px] items-center justify-center rounded-[2px] bg-[#fdc50d] text-[8.500px] font-extrabold leading-none tracking-[0.400px] text-[#2a2000]">PRE</div>
        </div>
      </div>
    </div>
  );
}

export default function App() {
  return (
    <div className="flex h-[1080px] w-[1920px] flex-col overflow-hidden bg-[#3b3b3b]">
      <TabStrip />
      <Toolbar />
      <div className="flex h-[932px] shrink-0 pl-[5px]">
        <div className="flex h-[928px] w-[1860px] shrink-0 flex-col overflow-hidden rounded-[9px] shadow-[0_0_3px_rgba(0,0,0,0.5)]">
          <div className="h-[3px] shrink-0 bg-[linear-gradient(90deg,#ff4b4b,#fffd80)]" />
          <div className="flex grow">
            <StreamlitSidebar />
            <StreamlitMain />
          </div>
        </div>
        <EdgeRail />
      </div>
      <Taskbar />
    </div>
  );
}
